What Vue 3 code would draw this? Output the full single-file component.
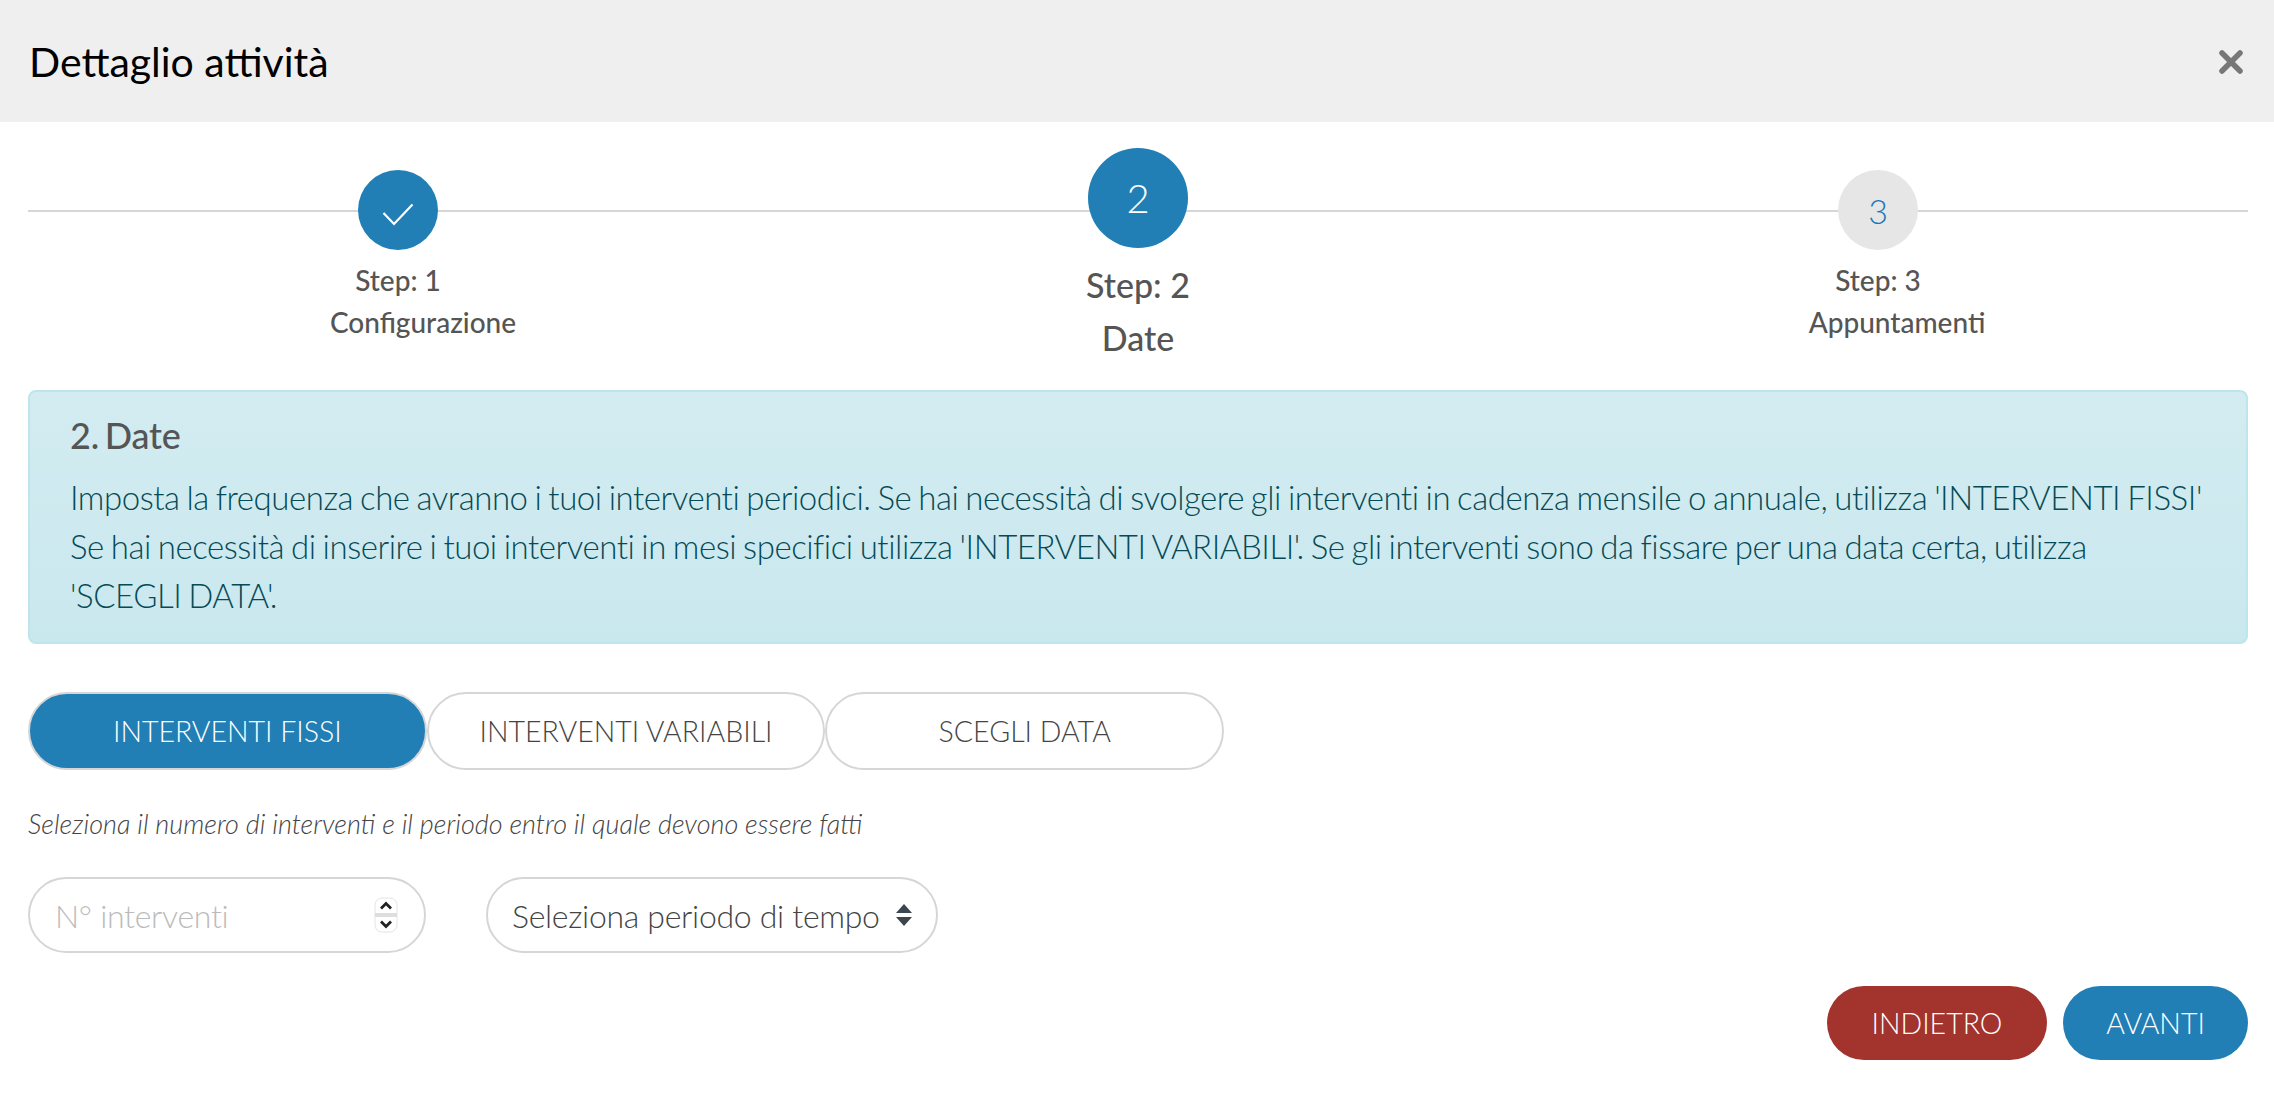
<script setup>
const steps = [
  { id: 1, state: 'done', title: 'Step: 1', label: 'Configurazione', labelClass: 'shift-a' },
  { id: 2, state: 'active', title: 'Step: 2', label: 'Date', labelClass: '' },
  { id: 3, state: 'todo', title: 'Step: 3', label: 'Appuntamenti', labelClass: 'shift-b' },
]
const tabs = [
  { label: 'INTERVENTI FISSI', active: true },
  { label: 'INTERVENTI VARIABILI', active: false },
  { label: 'SCEGLI DATA', active: false },
]
</script>

<template>
  <div class="modal">
    <header class="head">
      <h1 class="title">Dettaglio attività</h1>
      <button class="close" aria-label="Chiudi">
        <svg width="26" height="26" viewBox="0 0 26 26"><path d="M4 4 L22 22 M22 4 L4 22" stroke="#777" stroke-width="5.500" stroke-linecap="round" /></svg>
      </button>
    </header>

    <main class="body">
      <section class="stepper">
        <div class="line"></div>
        <div v-for="s in steps" :key="s.id" class="step" :class="s.state">
          <div class="circle">
            <svg v-if="s.state === 'done'" class="check" width="32" height="23" viewBox="0 0 32 23"><path d="M1.500 10 L12 21 L30.500 1.500" fill="none" stroke="#fff" stroke-width="2.200" /></svg>
            <span v-else>{{ s.id }}</span>
          </div>
          <div class="step-title">{{ s.title }}</div>
          <div class="step-label" :class="s.labelClass">{{ s.label }}</div>
        </div>
      </section>

      <section class="alert">
        <h2 class="alert-head">2. Date</h2>
        <p class="alert-text">Imposta la frequenza che avranno i tuoi interventi periodici. Se hai necessità di svolgere gli interventi in cadenza mensile o annuale, utilizza 'INTERVENTI FISSI' Se hai necessità di inserire i tuoi interventi in mesi specifici utilizza 'INTERVENTI VARIABILI'. Se gli interventi sono da fissare per una data certa, utilizza <span class="nowrap">'SCEGLI DATA'.</span></p>
      </section>

      <div class="tabs">
        <button v-for="t in tabs" :key="t.label" class="tab" :class="{ on: t.active }">{{ t.label }}</button>
      </div>

      <p class="hint">Seleziona il numero di interventi e il periodo entro il quale devono essere fatti</p>

      <div class="fields">
        <div class="num-wrap">
          <input class="num" type="text" placeholder="N° interventi" />
          <svg class="spin" width="24" height="36" viewBox="0 0 24 36">
            <rect x="1" y="1" width="22" height="34" rx="7" fill="#fff" stroke="#e4e4e4" />
            <rect x="1" y="16" width="22" height="4" fill="#dedede" />
            <path d="M7 11.500 L12 6.500 L17 11.500 M7 24.500 L12 29.500 L17 24.500" fill="none" stroke="#222" stroke-width="2.800" />
          </svg>
        </div>
        <div class="sel-wrap">
          <select class="sel"><option>Seleziona periodo di tempo</option></select>
          <svg class="sel-arrow" width="16" height="24" viewBox="0 0 16 24"><path d="M8 1 L16 10 H0 Z M0 14 H16 L8 23 Z" fill="#3d464d" /></svg>
        </div>
      </div>

      <div class="actions">
        <button class="btn red">INDIETRO</button>
        <button class="btn blue">AVANTI</button>
      </div>
    </main>
  </div>
</template>

<style>
html, body { margin: 0; background: #fff; }
</style>

<style scoped>
.modal { width: 2274px; height: 1105px; font-family: Lato, "Liberation Sans", sans-serif; color: #555; background: #fff; overflow: hidden; }
.head { height: 122px; background: #efefef; display: flex; align-items: center; justify-content: space-between; padding: 0 28px 0 29px; box-sizing: border-box; }
.title { margin: 0; font-size: 41px; font-weight: 400; color: #000; }
.close { border: 0; background: none; padding: 0; display: flex; margin-top: 2px; margin-right: 2px; }
.body { padding: 0 26px 0 28px; }
.stepper { position: relative; display: grid; grid-template-columns: repeat(3, 1fr); height: 268px; }
.line { position: absolute; left: 0; right: 0; top: 88px; height: 2px; background: #d6d6d6; }
.step { position: relative; display: flex; flex-direction: column; align-items: center; font-size: 28px; font-weight: 500; padding-top: 48px; }
.circle { width: 80px; height: 80px; border-radius: 50%; display: flex; align-items: center; justify-content: center; background: #217fb5; color: #fff; font-size: 34px; font-weight: 300; }
.check { margin-top: 8px; }
.step-title { margin-top: 9px; line-height: 42px; }
.step-label { line-height: 42px; }
.shift-a { margin-left: 50px; }
.shift-b { margin-left: 38px; }
.step.active { padding-top: 26px; font-size: 34px; }
.step.active .circle { width: 100px; height: 100px; font-size: 40px; }
.step.active .step-title { margin-top: 11px; line-height: 52px; }
.step.active .step-label { line-height: 53px; }
.step.todo .circle { background: #e6e6e6; color: #1a78b8; }
.alert { height: 254px; box-sizing: border-box; border: 2px solid #bee5eb; border-radius: 8px; background: linear-gradient(#d3ecf1, #c9e8ee); padding: 21px 40px; color: #0c5460; }
.alert-head { margin: 0 0 16px; font-size: 36px; font-weight: 500; word-spacing: -3px; letter-spacing: -0.2px; color: #555; line-height: 44px; }
.alert-text { margin: 0; font-size: 33px; font-weight: 300; letter-spacing: -0.47px; word-spacing: -1.500px; line-height: 49px; color: #064a56; }
.nowrap { white-space: nowrap; }
.tabs { display: flex; margin-top: 48px; }
.tab { width: 398.700px; height: 78px; border: 2px solid #d6d6d6; border-radius: 39px; background: #fff; font-family: inherit; font-size: 28.500px; font-weight: 300; color: #444; padding: 0; }
.tab.on { background: #217fb5; color: #fff; }
.hint { margin: 37px 0 0; font-size: 27px; font-style: italic; font-weight: 300; line-height: 34px; color: #444; }
.fields { display: flex; gap: 60px; margin-top: 36px; }
.num-wrap, .sel-wrap { position: relative; }
.num { width: 398px; height: 76px; box-sizing: border-box; border: 2px solid #d6d6d6; border-radius: 38px; padding: 0 25px; font-family: inherit; font-size: 32px; letter-spacing: -0.3px; font-weight: 300; outline: 0; background: #fff; display: block; }
.num::placeholder { color: #bbb; opacity: 1; }
.spin { position: absolute; right: 28px; top: 20px; }
.sel { appearance: none; width: 452px; height: 76px; box-sizing: border-box; border: 2px solid #d6d6d6; border-radius: 38px; padding: 0 24px; font-family: inherit; font-size: 32px; letter-spacing: -0.3px; font-weight: 300; color: #444; background: #fff; display: block; outline: 0; }
.sel-arrow { position: absolute; right: 26px; top: 26px; }
.actions { display: flex; justify-content: flex-end; gap: 16px; margin-top: 33px; }
.btn { height: 74px; border: 0; border-radius: 37px; color: #fff; font-family: inherit; font-size: 28.500px; font-weight: 300; padding: 0; }
.red { width: 220px; background: #a3332d; }
.blue { width: 185px; background: #217fb5; }
</style>
